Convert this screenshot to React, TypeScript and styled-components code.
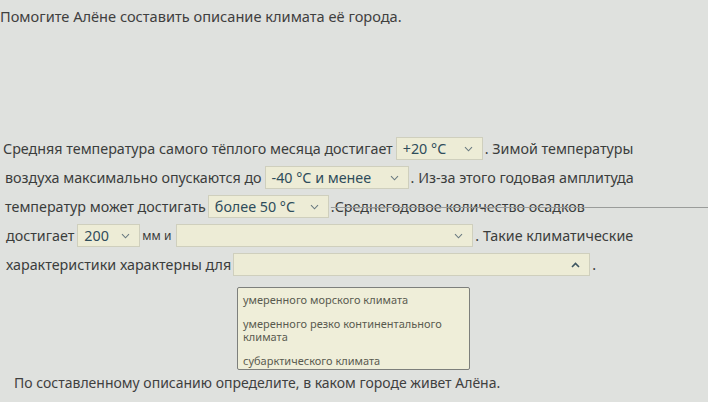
import React from "react";
import styled, { createGlobalStyle } from "styled-components";

const Global = createGlobalStyle`
  html, body { margin: 0; padding: 0; background: #dfe1de; }
  body { width: 708px; height: 402px; overflow: hidden; font-family: "Noto Sans", "Open Sans", sans-serif; color: #3b3d3c; }
`;

const Page = styled.div`
  display: flex;
  flex-direction: column;
  padding: 6px 0 0 0;
`;

const Title = styled.div`
  font-size: 14.6px;
  line-height: 20px;
  margin-left: 0;
  color: #3f403f;
`;

const Paragraph = styled.div`
  display: flex;
  flex-direction: column;
  margin-top: 108px;
  padding-left: 3px;
  position: relative;
`;

const Row = styled.div<{ $indent?: number }>`
  display: flex;
  align-items: center;
  height: 29px;
  font-size: 14.3px;
  white-space: nowrap;
  padding-left: ${(p) => p.$indent ?? 0}px;
`;

const Text = styled.span<{ $gap?: number; $small?: boolean }>`
  margin-right: ${(p) => p.$gap ?? 0}px;
  font-size: ${(p) => (p.$small ? "12px" : "inherit")};
`;

const Struck = styled.span`
  text-decoration: line-through;
  text-decoration-color: #9a9c9a;
  text-decoration-thickness: 1px;
`;

const Filler = styled.span`
  flex: 1;
  height: 1px;
  background: #9a9c9a;
  margin-top: 2px;
`;

const SelectBox = styled.div<{ $w: number }>`
  position: relative;
  box-sizing: border-box;
  width: ${(p) => p.$w}px;
  height: 23px;
  display: flex;
  align-items: center;
  justify-content: space-between;
  padding: 0 9px 0 6px;
  background: #edecd6;
  border: 1px solid #cfcfbd;
  color: #2f4d5b;
  font-size: 14.3px;
  margin-right: 2px;
`;

const Chevron = styled.svg`
  width: 9px;
  height: 6px;
  flex: none;
`;

const Menu = styled.div`
  position: absolute;
  left: 237px;
  top: 153px;
  width: 233px;
  box-sizing: border-box;
  background: #efeed9;
  border: 1px solid #7d7f7c;
  border-radius: 2px;
  display: flex;
  flex-direction: column;
`;

const Option = styled.div`
  font-size: 11px;
  line-height: 13px;
  color: #5a5b50;
  padding: 5px 5px 6px;
  white-space: normal;
  &:last-child { padding-bottom: 2px; }
`;

const Footer = styled.div`
  font-size: 14px;
  line-height: 20px;
  margin-top: 94px;
  padding-left: 14px;
  color: #3f403f;
`;

function Select({ w, value, open }: { w: number; value?: string; open?: boolean }) {
  return (
    <SelectBox $w={w}>
      <span>{value ?? ""}</span>
      <Chevron viewBox="0 0 9 6">
        {open ? (
          <path d="M1 5 L4.5 1.5 L8 5" fill="none" stroke="#3d5560" strokeWidth="1.6" />
        ) : (
          <path d="M1 1.2 L4.5 4.8 L8 1.2" fill="none" stroke="#6a7a80" strokeWidth="1.1" />
        )}
      </Chevron>
    </SelectBox>
  );
}

export default function App() {
  return (
    <Page>
      <Global />
      <Title>Помогите Алёне составить описание климата её города.</Title>
      <Paragraph>
        <Row>
          <Text $gap={3}>Средняя температура самого тёплого месяца достигает</Text>
          <Select w={87} value="+20 °C" />
          <Text>. Зимой температуры</Text>
        </Row>
        <Row $indent={2}>
          <Text $gap={3}>воздуха максимально опускаются до</Text>
          <Select w={144} value="-40 °C и менее" />
          <Text>. Из-за этого годовая амплитуда</Text>
        </Row>
        <Row $indent={2}>
          <Text $gap={2}>температур может достигать</Text>
          <Select w={121} value="более 50 °C" />
          <Struck>.Среднегодовое количество осадков</Struck>
          <Filler />
        </Row>
        <Row $indent={3}>
          <Text $gap={3}>достигает</Text>
          <Select w={63} value="200" />
          <Text $gap={5} $small>мм и</Text>
          <Select w={297} />
          <Text>. Такие климатические</Text>
        </Row>
        <Row $indent={3}>
          <Text $gap={2}>характеристики характерны для</Text>
          <Select w={357} open />
          <Text>.</Text>
        </Row>
        <Menu>
          <Option>умеренного морского климата</Option>
          <Option>умеренного резко континентального климата</Option>
          <Option>субарктического климата</Option>
        </Menu>
      </Paragraph>
      <Footer>По составленному описанию определите, в каком городе живет Алёна.</Footer>
    </Page>
  );
}
